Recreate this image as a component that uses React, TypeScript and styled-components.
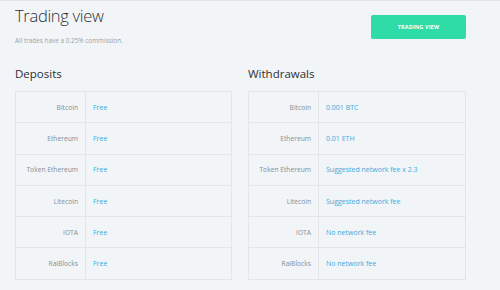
import React from "react";
import styled, { createGlobalStyle } from "styled-components";

interface IFeeRow {
  coin: string;
  fee: string;
}

const deposits: IFeeRow[] = [
  { coin: "Bitcoin", fee: "Free" },
  { coin: "Ethereum", fee: "Free" },
  { coin: "Token Ethereum", fee: "Free" },
  { coin: "Litecoin", fee: "Free" },
  { coin: "IOTA", fee: "Free" },
  { coin: "RaiBlocks", fee: "Free" },
];

const withdrawals: IFeeRow[] = [
  { coin: "Bitcoin", fee: "0.001 BTC" },
  { coin: "Ethereum", fee: "0.01 ETH" },
  { coin: "Token Ethereum", fee: "Suggested network fee x 2.3" },
  { coin: "Litecoin", fee: "Suggested network fee" },
  { coin: "IOTA", fee: "No network fee" },
  { coin: "RaiBlocks", fee: "No network fee" },
];

const GlobalStyle = createGlobalStyle`
  html, body {
    margin: 0;
    padding: 0;
    background: #f2f5f8;
    font-family: "Open Sans", "Liberation Sans", sans-serif;
  }
`;

const Page = styled.div`
  width: 500px;
  height: 290px;
  box-sizing: border-box;
  border-top: 1px solid #e2e6ea;
  padding: 0 34px 0 15px;
  background: #f2f5f8;
  overflow: hidden;
`;

const Header = styled.header`
  display: flex;
  justify-content: space-between;
  align-items: flex-start;
`;

const TitleBlock = styled.div`
  display: flex;
  flex-direction: column;
`;

const Title = styled.h1`
  margin: 4px 0 0;
  font-size: 16.5px;
  line-height: 22px;
  font-weight: 300;
  letter-spacing: -0.3px;
  color: #2b2f33;
`;

const Subtitle = styled.p`
  margin: 10px 0 0;
  font-size: 6.4px;
  line-height: 8px;
  color: #9aa2aa;
`;

const ActionButton = styled.button`
  margin-top: 14px;
  width: 95px;
  height: 24px;
  border: none;
  border-radius: 2px;
  background: #2fdba6;
  color: #ffffff;
  font-family: inherit;
  font-size: 5.5px;
  font-weight: 700;
  letter-spacing: 0.1px;
  cursor: pointer;
`;

const Columns = styled.div`
  display: grid;
  grid-template-columns: 217px 218px;
  column-gap: 16px;
  margin-top: 22px;
`;

const SectionTitle = styled.h2`
  margin: 0 0 10px;
  font-size: 11.5px;
  line-height: 14px;
  font-weight: 400;
  color: #2b2f33;
`;

const Table = styled.div`
  border: 1px solid #e1e6ea;
  border-bottom: none;
`;

const Row = styled.div`
  display: grid;
  grid-template-columns: 70px 1fr;
  height: 31.3px;
  box-sizing: border-box;
  border-bottom: 1px solid #e1e6ea;
`;

const Label = styled.div`
  display: flex;
  align-items: center;
  justify-content: flex-end;
  padding-right: 7px;
  border-right: 1px solid #e1e6ea;
  font-size: 6.7px;
  color: #838d96;
  white-space: nowrap;
`;

const Value = styled.div`
  display: flex;
  align-items: center;
  padding-left: 7px;
  font-size: 7px;
  color: #35ade0;
  white-space: nowrap;
`;

const FeeTable: React.FC<{ rows: IFeeRow[] }> = ({ rows }) => (
  <Table>
    {rows.map((row) => (
      <Row key={row.coin}>
        <Label>{row.coin}</Label>
        <Value>{row.fee}</Value>
      </Row>
    ))}
  </Table>
);

const App: React.FC = (): JSX.Element => (
  <>
    <GlobalStyle />
    <Page>
      <Header>
        <TitleBlock>
          <Title>{"Trading view"}</Title>
          <Subtitle>{"All trades have a 0.25% commission."}</Subtitle>
        </TitleBlock>
        <ActionButton>{"TRADING VIEW"}</ActionButton>
      </Header>
      <Columns>
        <section>
          <SectionTitle>{"Deposits"}</SectionTitle>
          <FeeTable rows={deposits} />
        </section>
        <section>
          <SectionTitle>{"Withdrawals"}</SectionTitle>
          <FeeTable rows={withdrawals} />
        </section>
      </Columns>
    </Page>
  </>
);

export default App;
